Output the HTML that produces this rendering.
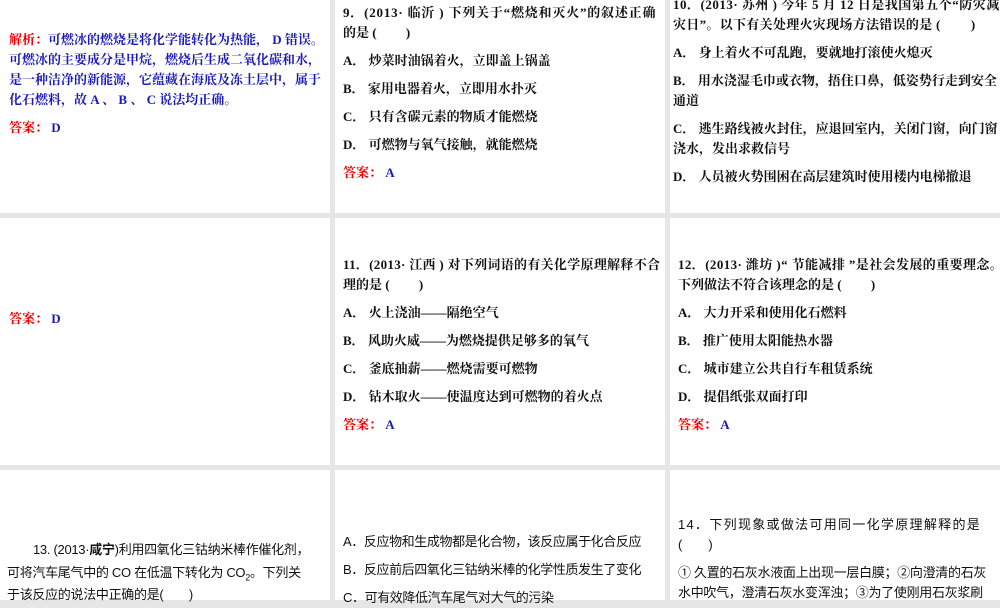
<!DOCTYPE html>
<html><head><meta charset="utf-8"><style>
body{margin:0;width:1000px;height:600px;background:#e6e6e6;position:relative;overflow:hidden;font-family:"Liberation Serif","Noto Serif CJK SC",serif;font-size:13px;color:#111;font-weight:bold}
.p{position:absolute;background:#fff}
.t{position:absolute;line-height:20px;white-space:nowrap}
.r{color:#e00}.b{color:#1a1ab8}
.n{font-weight:normal;font-family:"Liberation Sans","Noto Sans CJK SC",sans-serif;font-size:13px}
</style></head><body>
<div class="p" style="left:0;top:0;width:330px;height:213px"></div>
<div class="p" style="left:335px;top:0;width:330px;height:213px"></div>
<div class="p" style="left:670px;top:0;width:330px;height:213px"></div>
<div class="p" style="left:0;top:218px;width:330px;height:247px"></div>
<div class="p" style="left:335px;top:218px;width:330px;height:247px"></div>
<div class="p" style="left:670px;top:218px;width:330px;height:247px"></div>
<div class="p" style="left:0;top:470px;width:330px;height:130px"></div>
<div class="p" style="left:335px;top:470px;width:330px;height:130px"></div>
<div class="p" style="left:670px;top:470px;width:330px;height:130px"></div>

<div class="t b" style="left:9px;top:30px"><span class="r">解析：</span>可燃冰的燃烧是将化学能转化为热能， D 错误。</div>
<div class="t b" style="left:9px;top:50px">可燃冰的主要成分是甲烷，燃烧后生成二氧化碳和水，</div>
<div class="t b" style="left:9px;top:70px">是一种洁净的新能源，它蕴藏在海底及冻土层中，属于</div>
<div class="t b" style="left:9px;top:90px">化石燃料，故 A 、 B 、 C 说法均正确。</div>
<div class="t b" style="left:9px;top:118px"><span class="r">答案：</span> D</div>

<div class="t" style="left:343px;top:3px;letter-spacing:0.8px">9．(2013· 临沂 ) 下列关于“燃烧和灭火”的叙述正确</div>
<div class="t" style="left:343px;top:23px">的是 (　　 )</div>
<div class="t" style="left:343px;top:51px">A． 炒菜时油锅着火，立即盖上锅盖</div>
<div class="t" style="left:343px;top:79px">B． 家用电器着火，立即用水扑灭</div>
<div class="t" style="left:343px;top:107px">C． 只有含碳元素的物质才能燃烧</div>
<div class="t" style="left:343px;top:135px">D． 可燃物与氧气接触，就能燃烧</div>
<div class="t" style="left:343px;top:163px"><span class="r">答案：</span> <span class="b">A</span></div>

<div class="t" style="left:673px;top:-5px;letter-spacing:0.5px">10．(2013· 苏州 ) 今年 5 月 12 日是我国第五个“防灾减</div>
<div class="t" style="left:673px;top:15px;letter-spacing:0.3px">灾日”。以下有关处理火灾现场方法错误的是 (　　 )</div>
<div class="t" style="left:673px;top:43px">A． 身上着火不可乱跑，要就地打滚使火熄灭</div>
<div class="t" style="left:673px;top:71px">B． 用水浇湿毛巾或衣物，捂住口鼻，低姿势行走到安全</div>
<div class="t" style="left:673px;top:91px">通道</div>
<div class="t" style="left:673px;top:119px">C． 逃生路线被火封住，应退回室内，关闭门窗，向门窗</div>
<div class="t" style="left:673px;top:139px">浇水，发出求救信号</div>
<div class="t" style="left:673px;top:167px">D． 人员被火势围困在高层建筑时使用楼内电梯撤退</div>

<div class="t" style="left:9px;top:309px"><span class="r">答案：</span> <span class="b">D</span></div>

<div class="t" style="left:343px;top:255px;letter-spacing:0.3px">11．(2013· 江西 ) 对下列词语的有关化学原理解释不合</div>
<div class="t" style="left:343px;top:275px">理的是 (　　 )</div>
<div class="t" style="left:343px;top:303px">A． 火上浇油——隔绝空气</div>
<div class="t" style="left:343px;top:331px">B． 风助火威——为燃烧提供足够多的氧气</div>
<div class="t" style="left:343px;top:359px">C． 釜底抽薪——燃烧需要可燃物</div>
<div class="t" style="left:343px;top:387px">D． 钻木取火——使温度达到可燃物的着火点</div>
<div class="t" style="left:343px;top:415px"><span class="r">答案：</span> <span class="b">A</span></div>

<div class="t" style="left:678px;top:255px;letter-spacing:0.4px">12．(2013· 潍坊 )“ 节能减排 ”是社会发展的重要理念。</div>
<div class="t" style="left:678px;top:275px">下列做法不符合该理念的是 (　　 )</div>
<div class="t" style="left:678px;top:303px">A． 大力开采和使用化石燃料</div>
<div class="t" style="left:678px;top:331px">B． 推广使用太阳能热水器</div>
<div class="t" style="left:678px;top:359px">C． 城市建立公共自行车租赁系统</div>
<div class="t" style="left:678px;top:387px">D． 提倡纸张双面打印</div>
<div class="t" style="left:678px;top:415px"><span class="r">答案：</span> <span class="b">A</span></div>

<div class="t n" style="left:33px;top:540px;letter-spacing:-0.3px">13. (2013·<b>咸宁</b>)利用四氧化三钴纳米棒作催化剂，</div>
<div class="t n" style="left:7px;top:563px;letter-spacing:-0.3px">可将汽车尾气中的 CO 在低温下转化为 CO<sub style="font-size:9px">2</sub>。下列关</div>
<div class="t n" style="left:7px;top:585px;letter-spacing:-0.3px">于该反应的说法中正确的是(　　)</div>

<div class="t n" style="left:343px;top:532px;letter-spacing:-0.4px">A．反应物和生成物都是化合物，该反应属于化合反应</div>
<div class="t n" style="left:343px;top:560px;letter-spacing:-0.4px">B．反应前后四氧化三钴纳米棒的化学性质发生了变化</div>
<div class="t n" style="left:343px;top:588px;letter-spacing:-0.4px">C．可有效降低汽车尾气对大气的污染</div>

<div class="t n" style="left:678px;top:515px;letter-spacing:1.3px">14．下列现象或做法可用同一化学原理解释的是</div>
<div class="t n" style="left:678px;top:535px">(　　)</div>
<div class="t n" style="left:678px;top:563px;letter-spacing:-0.3px">① 久置的石灰水液面上出现一层白膜；②向澄清的石灰</div>
<div class="t n" style="left:678px;top:583px;letter-spacing:-0.3px">水中吹气，澄清石灰水变浑浊；③为了使刚用石灰浆刷</div>
</body></html>
